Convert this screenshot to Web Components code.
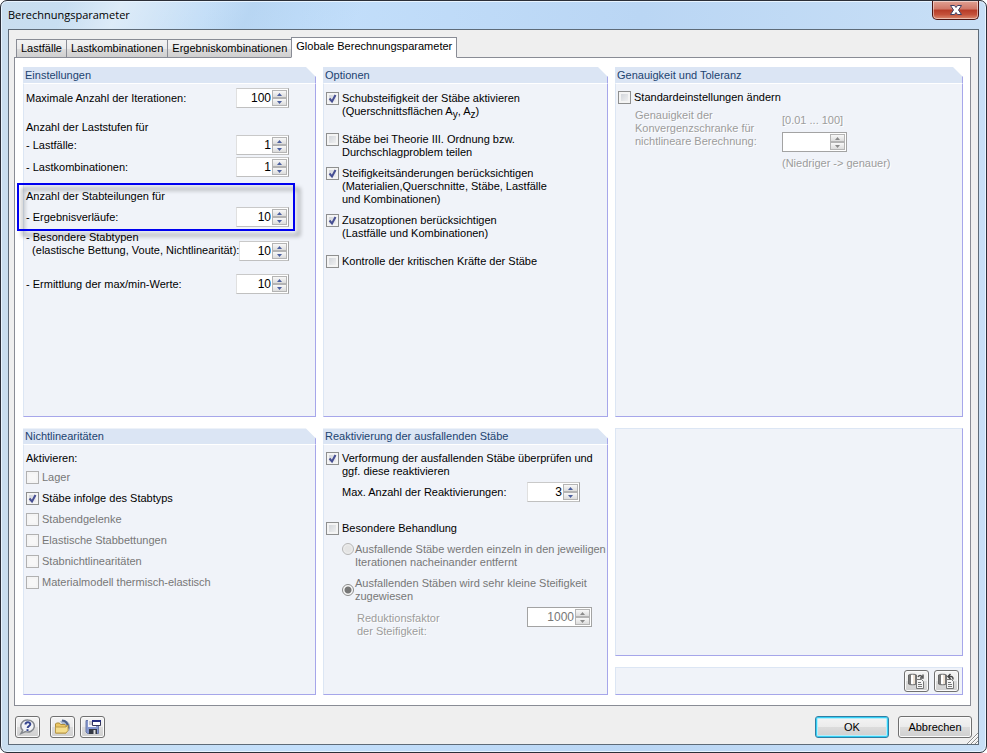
<!DOCTYPE html>
<html lang="de">
<head>
<meta charset="utf-8">
<title>Berechnungsparameter</title>
<style>
    body {
        margin: 0;
        background: white;
        font: 11px/13px "Liberation Sans", Arial, sans-serif;
        color: black;
    }
</style>
</head>
<body>
<calc-dialog></calc-dialog>

<script>
class BaseElement extends HTMLElement {
    constructor() {
        super();
        this.attachShadow({ mode: 'open' });
    }

    connectedCallback() {
        this.shadowRoot.innerHTML = `<style>* { box-sizing: border-box; }</style>${this.render()}`;
    }

    flag(name) {
        return this.hasAttribute(name) ? name : '';
    }
}

// Window frame with title bar, client area and button bar
class AeroWindow extends BaseElement {
    render() {
        return `
            <style>
                :host {
                    display: flex;
                    flex-direction: column;
                    box-sizing: border-box;
                    min-height: 100vh;
                    padding: 0 7px 7px;
                    border: 1px solid #2b2f38;
                    border-radius: 7px;
                    background:
                        linear-gradient(115deg, transparent 60px, #ffffff66 110px, transparent 190px, #9fc3e555 230px, transparent 330px) 0 0 / 100% 29px no-repeat,
                        linear-gradient(90deg, #c9deef, #c3dffb 30%, #bad6f4 65%, #c8dff6);
                    box-shadow: inset 0 0 0 1px #e8f4ff;
                }
                header {
                    display: flex;
                    justify-content: space-between;
                    height: 28px;
                }
                h1 {
                    margin: 0;
                    font: 11px/28px "Open Sans", sans-serif;
                }
                .close {
                    width: 47px;
                    height: 19px;
                    padding: 0;
                    border: 1px solid #4c1512;
                    border-top: 0;
                    border-radius: 0 0 5px 5px;
                    background: linear-gradient(#e0a193, #cf7767 45%, #b63b27 50%, #c4513a 75%, #dc8a70);
                    box-shadow: inset 0 0 0 1px #ffffff77;
                }
                .close svg { display: block; margin: 0 auto; }
                main {
                    display: flex;
                    flex: 1;
                    flex-direction: column;
                    padding: 7px 7px 0 5px;
                    border: 1px solid #5e6b78;
                    background: #efefef;
                }
                footer {
                    display: flex;
                    align-items: flex-start;
                    gap: 5px;
                    height: 38px;
                    margin-right: -1px;
                    padding: 10px 0 0 1px;
                    position: relative;
                }
                .grip { position: absolute; right: -6px; bottom: 0; }
            </style>
            <header>
                <h1>${this.getAttribute('heading')}</h1>
                <button class="close" aria-label="Schließen">
                    <svg width="14" height="12" viewBox="0 0 14 12">
                        <path d="M1.500 1.500h4L7 3.500l1.500-2h4L9.500 6l3 4.500h-4L7 8.500l-1.500 2h-4l3-4.500z" fill="#fff" stroke="#3f3f63"/>
                    </svg>
                </button>
            </header>
            <main>
                <slot></slot>
                <footer>
                    <slot name="footer"></slot>
                    <svg class="grip" width="12" height="12">
                        <path d="M1 12L12 1M5 12l7-7M9 12l3-3" stroke="#8d8d8d"/>
                        <path d="M2 12L12 2M6 12l6-6M10 12l2-2" stroke="#fff"/>
                    </svg>
                </footer>
            </main>
        `;
    }
}

class TabPanel extends BaseElement {
    render() {
        const tabs = this.getAttribute('tabs').split('|');
        const active = Number(this.getAttribute('active'));
        return `
            <style>
                :host { display: flex; flex: 1; flex-direction: column; }
                nav {
                    display: flex;
                    align-items: flex-end;
                    padding-left: 2px;
                    position: relative;
                    margin-bottom: -1px;
                }
                button {
                    height: 19px;
                    padding: 0 4px;
                    border: 1px solid #898c95;
                    border-left-width: 0;
                    background: linear-gradient(#f3f3f3, #ebebeb 50%, #dddddd 50%, #cfcfcf);
                    font: inherit;
                    white-space: nowrap;
                }
                button:first-child { border-left-width: 1px; }
                button[aria-selected="true"] {
                    height: 21px;
                    margin-left: -1px;
                    padding: 0 4px 2px;
                    border-left-width: 1px;
                    border-bottom-color: white;
                    background: white;
                }
                section {
                    display: flex;
                    flex: 1;
                    flex-direction: column;
                    padding: 9px 7px 10px 8px;
                    border: 1px solid #898c95;
                    background: white;
                }
            </style>
            <nav role="tablist">
                ${tabs.map((tab, i) => `<button role="tab" aria-selected="${i === active}">${tab}</button>`).join('')}
            </nav>
            <section role="tabpanel"><slot></slot></section>
        `;
    }
}

class ParamGroup extends BaseElement {
    render() {
        const heading = this.getAttribute('heading');
        return `
            <style>
                :host { display: flex; flex-direction: column; }
                h2 {
                    flex: none;
                    margin: 0;
                    padding-left: 2px;
                    border-right: 1px solid #a6a6ea;
                    background: #dbe5f4;
                    color: #1c4370;
                    font: inherit;
                    line-height: 16px;
                    clip-path: polygon(0 0, calc(100% - 10px) 0, 100% 10px, 100% 100%, 0 100%);
                }
                div {
                    flex: 1;
                    padding: 0 2px;
                    border: 1px solid #a6a6ea;
                    border-top-color: #dce6f4;
                    border-left-color: #dce6f4;
                    background: #f0f3f9;
                }
                h2 + div { border-top-color: white; }
            </style>
            ${heading ? `<h2>${heading}</h2>` : ''}
            <div><slot></slot></div>
        `;
    }
}

// Label with a number box and its up and down buttons
class SpinField extends BaseElement {
    render() {
        const off = this.flag('disabled');
        return `
            <style>
                :host { display: flex; align-items: center; justify-content: space-between; }
                :host([disabled]) { color: #9c9c9c; text-shadow: 1px 1px white; }
                label { flex: none; }
                .box {
                    display: flex;
                    flex: 0 1 var(--spin-width, 53px);
                    min-width: 0;
                    height: 20px;
                    padding: 1px;
                    border: 1px solid #a3a3a3;
                    border-top-color: #c9c9c9;
                    border-left-color: #e0e0e0;
                    border-bottom-color: #c0c0c0;
                    background: white;
                }
                :host([disabled]) .box { border-color: #a3a3a3; }
                input {
                    flex: 1;
                    min-width: 0;
                    width: 0;
                    padding: 0 1px 0 0;
                    border: 0;
                    outline: 0;
                    background: none;
                    font: 12px "Liberation Sans", Arial, sans-serif;
                    color: black;
                    text-align: right;
                    appearance: textfield;
                }
                input:disabled { color: #777; }
                input::-webkit-inner-spin-button { appearance: none; }
                .buttons { display: grid; flex: none; width: 15px; }
                button {
                    display: grid;
                    place-items: center;
                    min-height: 0;
                    padding: 0;
                    border: 1px solid #b4b4b4;
                    background: linear-gradient(#f8f8f8, #dcdcdc);
                    color: #4b5f9e;
                }
                button:disabled { color: #8a8a8a; }
                svg { display: block; }
            </style>
            <label for="value"><slot></slot></label>
            <span class="box">
                <input id="value" type="number" value="${this.getAttribute('value') || ''}" ${off}>
                <span class="buttons">
                    <button aria-label="Mehr" tabindex="-1" ${off}><svg width="5" height="3"><path d="M0 3L2.500 0L5 3z" fill="currentColor"/></svg></button>
                    <button aria-label="Weniger" tabindex="-1" ${off}><svg width="5" height="3"><path d="M0 0L2.500 3L5 0z" fill="currentColor"/></svg></button>
                </span>
            </span>
        `;
    }
}

class CheckOption extends BaseElement {
    render() {
        return `
            <style>
                :host { display: block; }
                :host([disabled]) { color: #777; }
                label { display: grid; grid-template-columns: 13px auto; justify-content: start; column-gap: 3px; white-space: nowrap; }
                input {
                    appearance: none;
                    grid-area: 1 / 1;
                    width: 13px;
                    height: 13px;
                    margin: 0;
                    border: 1px solid #8e8f8f;
                    background: linear-gradient(135deg, #cbcfd5, #f6f6f6);
                    box-shadow: inset 0 0 0 2px #f4f4f4;
                }
                input:disabled { border-color: #b1b1b1; background: #f7f7f7; }
                svg { grid-area: 1 / 1; visibility: hidden; pointer-events: none; }
                input:checked + svg { visibility: visible; }
            </style>
            <label>
                <input type="checkbox" ${this.flag('checked')} ${this.flag('disabled')}>
                <svg width="13" height="13"><path d="M3.500 6.500L6 9.500L9.500 3" fill="none" stroke="#474f93" stroke-width="2"/></svg>
                <span><slot></slot></span>
            </label>
        `;
    }
}

class RadioOption extends BaseElement {
    render() {
        return `
            <style>
                :host { display: block; color: #777; }
                label { display: flex; align-items: center; gap: 1px; white-space: nowrap; }
                :host([top]) label { align-items: flex-start; }
                input {
                    appearance: none;
                    flex: none;
                    width: 12px;
                    height: 12px;
                    margin: 0;
                    border: 1px solid #b5b5b5;
                    border-radius: 50%;
                    background: radial-gradient(#e4e4e4 40%, #f8f8f8);
                }
                input:checked {
                    border-color: #8c8c8c;
                    background: radial-gradient(#777 0 3px, #f8f8f8 4px);
                }
            </style>
            <label>
                <input type="radio" ${this.flag('checked')} ${this.flag('disabled')}>
                <span><slot></slot></span>
            </label>
        `;
    }
}

class PushButton extends BaseElement {
    render() {
        const label = this.getAttribute('label');
        return `
            <style>
                :host { display: block; }
                button {
                    display: grid;
                    place-items: center;
                    width: 74px;
                    height: 22px;
                    padding: 0;
                    border: 1px solid #707070;
                    border-radius: 3px;
                    background: linear-gradient(#f4f4f4, #ebebeb 50%, #dcdcdc 50%, #cfcfcf);
                    box-shadow: inset 0 0 0 1px #fbfbfb;
                    font: inherit;
                    color: black;
                }
                :host([icon]) button { width: 25px; }
                :host([primary]) button {
                    border-color: #2f7fa5;
                    box-shadow: inset 0 0 0 1px #35d0f5, inset 0 0 0 2px #b5eefb;
                }
            </style>
            <button ${label ? `aria-label="${label}"` : ''}><slot></slot></button>
        `;
    }
}

const icons = {
    help: `<svg width="17" height="16" viewBox="0 0 17 16">
        <path d="M9 1a6.500 6 0 1 1-2.500 11.600L2 14.500l1.800-3.300A6.500 6 0 0 1 9 1z" fill="#f1f3f6" stroke="#85898f" stroke-width="1.500"/>
        <path d="M6.500 5.500C6.500 2.500 11.300 2.500 11.300 5.200c0 1.800-2.500 1.700-2.700 3.800" fill="none" stroke="#34448f" stroke-width="2"/>
        <path d="M7.500 10.200h2v1.800h-2z" fill="#34448f"/></svg>`,
    open: `<svg width="17" height="16" viewBox="0 0 17 16">
        <path d="M6 2.500C9 0 14.500 1 16 6v5l-2 1.500z" fill="#a9b8cf"/>
        <path d="M8 1.500c4 0 6 3 6.500 8" fill="none" stroke="#4b5f89" stroke-width="2"/>
        <path d="M1.500 14V5l1-1h3l1 1.500H11l1 1V14z" fill="#ecc765" stroke="#ac8d3c"/>
        <path d="M1.500 14V8h10.500l2-2v5.500L12 14z" fill="#f5de8c" stroke="#bc9b48"/></svg>`,
    save: `<svg width="18" height="16" viewBox="0 0 18 16">
        <path d="M2 1.500h12.500v13H3.500L2 13z" fill="#8698cf" stroke="#6878a8"/>
        <path d="M4 1h8v7H4z" fill="#f4f5fa"/><path d="M5 3h5M5 5h5" stroke="#9999a4"/>
        <path d="M5 10h8v5H5z" fill="#343944"/><path d="M9.500 11h2v4h-2z" fill="#ddd"/>
        <path d="M8.500 1.500h8v5h-8z" fill="#fff" stroke="#34365a"/><path d="M8 1h9v2H8z" fill="#252e80"/></svg>`,
    copyTo: `<svg width="17" height="16" viewBox="0 0 17 16">
        <path d="M.500 2C.500 1 8.500 1 8.500 2v9c0 1-8 1-8 0z" fill="#fff" stroke="#666"/>
        <path d="M1 2h2v9.500l-2-.500zM7 2h1.500v9H7z" fill="#777"/><path d="M6 2v9" stroke="#ddc4ab"/>
        <path d="M8.500 6.500h5l2 2v7h-7z" fill="#f5f5f5" stroke="#777"/>
        <path d="M10 9.500h3M10 11.500h4M10 13.500h4" stroke="#777"/>
        <path d="M10 4c1-2 3-2 4 0M15 1.500V5h-3" fill="none" stroke="#555" stroke-width="1.500"/></svg>`,
    copyFrom: `<svg width="17" height="16" viewBox="0 0 17 16">
        <path d="M.500 2C.500 1 8.500 1 8.500 2v9c0 1-8 1-8 0z" fill="#fff" stroke="#666"/>
        <path d="M1 2h2v9.500l-2-.500zM7 2h1.500v9H7z" fill="#777"/><path d="M6 2v9" stroke="#ddc4ab"/>
        <path d="M8.500 6.500h5l2 2v7h-7z" fill="#f5f5f5" stroke="#777"/>
        <path d="M10 9.500h3M10 11.500h4M10 13.500h4" stroke="#777"/>
        <path d="M12.500 1L10 3.500L12.500 6M10 3.500h3c2 0 2 1 2 3" fill="none" stroke="#444" stroke-width="1.500"/></svg>`
};

class CalcDialog extends BaseElement {
    render() {
        return `
            <style>
                :host { display: block; }
                p { margin: 0; }
                .groups {
                    display: grid;
                    flex: 1;
                    grid-template-columns: minmax(0, 293fr) minmax(0, 285fr) minmax(0, 348fr);
                    grid-template-rows: 351fr 267fr;
                    gap: 11px 7px;
                }
                .side { display: flex; flex-direction: column; gap: 11px; }
                .side param-group:first-child { flex: 1; }
                .tools { display: flex; justify-content: flex-end; gap: 5px; padding: 2px 1px 2px 0; }
                .settings { width: 263px; padding-top: 4px; white-space: nowrap; }
                .settings p { margin-top: 13px; }
                .first { margin-top: 1px; }
                .next { margin-top: 2px; }
                .apart { margin-top: 13px; }
                .two-lines { align-items: flex-end; margin-top: 4px; }
                .two-lines span { display: block; padding-bottom: 4px; }
                .marked { position: relative; }
                .marked spin-field { margin-top: 4px; }
                .marked::after {
                    content: "";
                    position: absolute;
                    inset: -7px -6px -4px -9px;
                    border: 2px solid #0000f0;
                    filter: drop-shadow(5px 5px 2px #00000066);
                    pointer-events: none;
                }
                .checks { display: grid; gap: 8px; padding-top: 8px; }
                .checks .wide { margin-top: 7px; }
                .list { padding-top: 7px; }
                .list p { margin-bottom: -2px; }
                sub { font-size: 10px; line-height: 0; vertical-align: -3px; }
                .precision {
                    display: grid;
                    grid-template-columns: 147px auto;
                    padding: 5px 0 0 17px;
                    color: #9c9c9c;
                    text-shadow: 1px 1px white;
                }
                .precision > div { display: grid; gap: 5px; padding-top: 5px; }
                .precision spin-field { --spin-width: 65px; justify-content: flex-start; }
                .react { padding-top: 7px; }
                .indent { padding-left: 16px; }
                .react spin-field { width: 238px; margin-top: 4px; }
                .react .factor { --spin-width: 65px; align-items: flex-start; width: 250px; padding-left: 15px; }
                .factor span { display: block; padding-top: 5px; }
                .react radio-option { margin-top: 8px; }
                .special { margin-top: 20px; }
                .spacer { flex: 1; }
                .open { margin-left: 5px; }
                .cancel { margin-left: 4px; }
            </style>
            <aero-window heading="Berechnungsparameter">
                <tab-panel tabs="Lastfälle|Lastkombinationen|Ergebniskombinationen|Globale Berechnungsparameter" active="3">
                    <div class="groups">
                        <param-group heading="Einstellungen">
                            <div class="settings">
                                <spin-field value="100">Maximale Anzahl der Iterationen:</spin-field>
                                <p>Anzahl der Laststufen für</p>
                                <spin-field class="first" value="1">- Lastfälle:</spin-field>
                                <spin-field class="next" value="1">- Lastkombinationen:</spin-field>
                                <div class="marked">
                                    <p>Anzahl der Stabteilungen für</p>
                                    <spin-field value="10">- Ergebnisverläufe:</spin-field>
                                </div>
                                <spin-field class="two-lines" value="10"><span>- Besondere Stabtypen<br>&nbsp; (elastische Bettung, Voute, Nichtlinearität):</span></spin-field>
                                <spin-field class="apart" value="10">- Ermittlung der max/min-Werte:</spin-field>
                            </div>
                        </param-group>
                        <param-group heading="Optionen">
                            <div class="checks">
                                <check-option checked>Schubsteifigkeit der Stäbe aktivieren<br>(Querschnittsflächen A<sub>y</sub>, A<sub>z</sub>)</check-option>
                                <check-option class="wide">Stäbe bei Theorie III. Ordnung bzw.<br>Durchschlagproblem teilen</check-option>
                                <check-option checked>Steifigkeitsänderungen berücksichtigen<br>(Materialien,Querschnitte, Stäbe, Lastfälle<br>und Kombinationen)</check-option>
                                <check-option checked>Zusatzoptionen berücksichtigen<br>(Lastfälle und Kombinationen)</check-option>
                                <check-option class="wide">Kontrolle der kritischen Kräfte der Stäbe</check-option>
                            </div>
                        </param-group>
                        <param-group heading="Genauigkeit und Toleranz">
                            <div class="checks list"><check-option>Standardeinstellungen ändern</check-option></div>
                            <div class="precision">
                                <p>Genauigkeit der<br>Konvergenzschranke für<br>nichtlineare Berechnung:</p>
                                <div>
                                    <p>[0.01 ... 100]</p>
                                    <spin-field disabled></spin-field>
                                    <p>(Niedriger -&gt; genauer)</p>
                                </div>
                            </div>
                        </param-group>
                        <param-group heading="Nichtlinearitäten">
                            <div class="checks list">
                                <p>Aktivieren:</p>
                                <check-option disabled>Lager</check-option>
                                <check-option checked>Stäbe infolge des Stabtyps</check-option>
                                <check-option disabled>Stabendgelenke</check-option>
                                <check-option disabled>Elastische Stabbettungen</check-option>
                                <check-option disabled>Stabnichtlinearitäten</check-option>
                                <check-option disabled>Materialmodell thermisch-elastisch</check-option>
                            </div>
                        </param-group>
                        <param-group heading="Reaktivierung der ausfallenden Stäbe">
                            <div class="react">
                                <check-option checked>Verformung der ausfallenden Stäbe überprüfen und<br>ggf. diese reaktivieren</check-option>
                                <div class="indent"><spin-field value="3">Max. Anzahl der Reaktivierungen:</spin-field></div>
                                <check-option class="special">Besondere Behandlung</check-option>
                                <div class="indent">
                                    <radio-option top disabled>Ausfallende Stäbe werden einzeln in den jeweiligen<br>Iterationen nacheinander entfernt</radio-option>
                                    <radio-option checked disabled>Ausfallenden Stäben wird sehr kleine Steifigkeit<br>zugewiesen</radio-option>
                                    <spin-field class="factor" disabled value="1000"><span>Reduktionsfaktor<br>der Steifigkeit:</span></spin-field>
                                </div>
                            </div>
                        </param-group>
                        <div class="side">
                            <param-group></param-group>
                            <param-group>
                                <div class="tools">
                                    <push-button icon label="Übernehmen">${icons.copyTo}</push-button>
                                    <push-button icon label="Zurücksetzen">${icons.copyFrom}</push-button>
                                </div>
                            </param-group>
                        </div>
                    </div>
                </tab-panel>
                <push-button slot="footer" icon label="Hilfe">${icons.help}</push-button>
                <push-button slot="footer" class="open" icon label="Öffnen">${icons.open}</push-button>
                <push-button slot="footer" icon label="Speichern">${icons.save}</push-button>
                <div slot="footer" class="spacer"></div>
                <push-button slot="footer" primary>OK</push-button>
                <push-button slot="footer" class="cancel">Abbrechen</push-button>
            </aero-window>
        `;
    }
}

customElements.define('aero-window', AeroWindow);
customElements.define('tab-panel', TabPanel);
customElements.define('param-group', ParamGroup);
customElements.define('spin-field', SpinField);
customElements.define('check-option', CheckOption);
customElements.define('radio-option', RadioOption);
customElements.define('push-button', PushButton);
customElements.define('calc-dialog', CalcDialog);
</script>
</body>
</html>
